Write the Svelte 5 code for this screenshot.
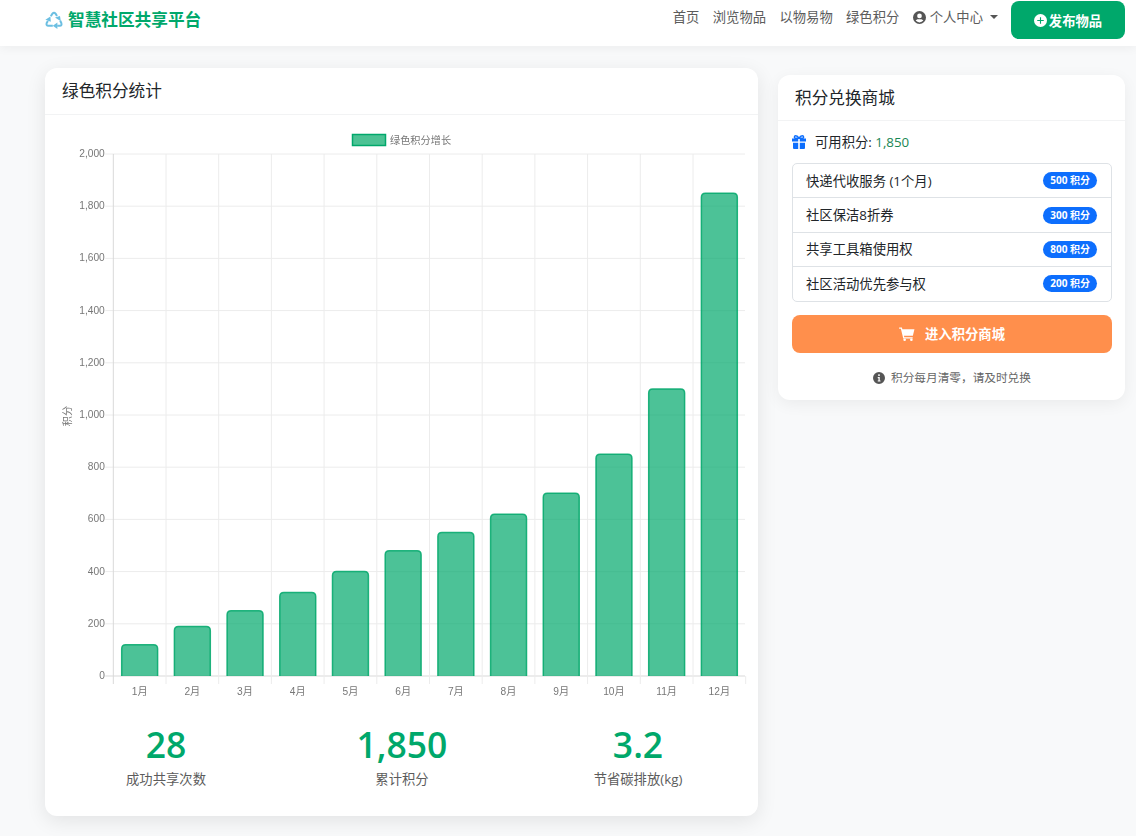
<script>
	const months = ['1月', '2月', '3月', '4月', '5月', '6月', '7月', '8月', '9月', '10月', '11月', '12月'];
	const values = [120, 190, 250, 320, 400, 480, 550, 620, 700, 850, 1100, 1850];
	const ticks = [0, 200, 400, 600, 800, 1000, 1200, 1400, 1600, 1800, 2000];

	const left = 68.3;
	const right = 700.7;
	const top = 39;
	const bottom = 561;
	const step = (right - left) / 12;

	const yOf = (v) => bottom - (v / 2000) * (bottom - top);
	const xOf = (i) => left + i * step;

	function barPath(i, v) {
		const x1 = xOf(i) + 8.4;
		const x2 = xOf(i) + step - 8.4;
		const y = yOf(v);
		return `M${x1} ${bottom}V${y + 4}Q${x1} ${y} ${x1 + 4} ${y}H${x2 - 4}Q${x2} ${y} ${x2} ${y + 4}V${bottom}`;
	}

	const rewards = [
		{ name: '快递代收服务 (1个月)', cost: 500 },
		{ name: '社区保洁8折券', cost: 300 },
		{ name: '共享工具箱使用权', cost: 800 },
		{ name: '社区活动优先参与权', cost: 200 }
	];

	const stats = [
		{ value: '28', label: '成功共享次数' },
		{ value: '1,850', label: '累计积分' },
		{ value: '3.2', label: '节省碳排放(kg)' }
	];
</script>

<div class="page">
	<nav class="navbar">
		<a class="brand" href="#top">
			<svg class="recycle" viewBox="0 0 18 18" width="18" height="18" aria-hidden="true">
				<g fill="none" stroke="#6cbfe2" stroke-width="2">
					<path d="M5.800 5.200 7.400 2.700Q9 1 10.600 2.700L12 5" />
					<path d="M15.200 9.800 16.300 12Q17.200 14.600 14.800 14.800H12.200" />
					<path d="M7.800 14.800H3.500Q.8 14.600 1.700 12L2.900 10" />
				</g>
				<g fill="#6cbfe2">
					<path d="M10 6.400l5-1.400.8 5.200z" />
					<path d="M12.400 11.400l-4.600 3.400 4.600 3.200z" />
					<path d="M.4 8.800l5.400 2L5.400 5.400z" />
				</g>
			</svg>
			智慧社区共享平台
		</a>
		<div class="nav-links">
			<a href="#top">首页</a>
			<a href="#top">浏览物品</a>
			<a href="#top">以物易物</a>
			<a href="#top">绿色积分</a>
			<a class="user" href="#top">
				<svg viewBox="0 0 16 16" width="13" height="13" aria-hidden="true">
					<path
						fill="#555"
						fill-rule="evenodd"
						d="M8 0a8 8 0 1 0 0 16A8 8 0 0 0 8 0zm0 3.2a2.9 2.9 0 1 1 0 5.8 2.9 2.9 0 0 1 0-5.8zM8 14a6.2 6.2 0 0 1-4.7-2.2c.6-1.1 1.8-1.8 3.1-1.8h3.2c1.3 0 2.500.7 3.100 1.800A6.200 6.200 0 0 1 8 14z"
					/>
				</svg>
				个人中心
				<span class="caret"></span>
			</a>
		</div>
		<button class="publish" type="button">
			<svg viewBox="0 0 16 16" width="13" height="13" aria-hidden="true">
				<path
					fill="#fff"
					fill-rule="evenodd"
					d="M8 0a8 8 0 1 0 0 16A8 8 0 0 0 8 0zm-.7 4h1.400v3.300H12v1.400H8.700V12H7.300V8.700H4V7.300h3.300z"
				/>
			</svg>
			发布物品
		</button>
	</nav>

	<main class="content">
		<section class="card points-card">
			<h2 class="card-head">绿色积分统计</h2>
			<svg class="chart" viewBox="0 0 713 590" width="713" height="590" role="img" aria-label="绿色积分增长">
				<rect x="307.500" y="19.500" width="33" height="11" fill="#4cc294" stroke="#00a86b" stroke-width="1.500" />
				<text x="345" y="29" class="legend">绿色积分增长</text>

				{#each ticks as t}
					<line
						x1={left - 8}
						x2={right - 0.7}
						y1={yOf(t)}
						y2={yOf(t)}
						stroke={t === 0 ? '#d9d9d9' : '#ececec'}
						stroke-width="1"
					/>
					<text x={left - 8.5} y={yOf(t) + 3} text-anchor="end" class="tick">{t.toLocaleString('en-US')}</text>
				{/each}

				{#each months as m, i}
					<line
						x1={xOf(i)}
						x2={xOf(i)}
						y1={top}
						y2={bottom + 8}
						stroke={i === 0 ? '#d9d9d9' : '#ececec'}
						stroke-width="1"
					/>
					<text x={xOf(i) + step / 2} y={bottom + 19} text-anchor="middle" class="tick">{m}</text>
				{/each}
				<line x1={right} x2={right} y1={bottom} y2={bottom + 8} stroke="#ececec" stroke-width="1" />

				{#each values as v, i}
					<path d={barPath(i, v)} fill="#00a86b" fill-opacity="0.7" stroke="#00a86b" stroke-width="1.500" stroke-opacity="0.85" />
				{/each}

				<text class="tick" text-anchor="middle" transform="translate(26 301) rotate(-90)">积分</text>
			</svg>

			<div class="stats">
				{#each stats as s}
					<div class="stat">
						<div class="stat-value">{s.value}</div>
						<div class="stat-label">{s.label}</div>
					</div>
				{/each}
			</div>
		</section>

		<aside class="card shop-card">
			<h2 class="card-head">积分兑换商城</h2>
			<div class="shop-body">
				<p class="balance">
					<svg viewBox="1 1 14 14" width="14" height="14" aria-hidden="true">
						<g fill="#0d6efd">
							<path d="M1 4.500h6.200v3H1zM8.800 4.500H15v3H8.800zM2 8.800h5.200V15H3a1 1 0 0 1-1-1zM8.800 8.800H14V14a1 1 0 0 1-1 1H8.800z" />
						</g>
						<path
							fill="none"
							stroke="#0d6efd"
							stroke-width="1.400"
							d="M8 4.300C7 2.300 5.800 1.700 4.700 1.700 3 1.700 2.800 4.300 4.800 4.300zM8 4.300c1-2 2.200-2.600 3.300-2.600 1.700 0 1.900 2.600-.1 2.600z"
						/>
					</svg>
					<span>可用积分: <b>1,850</b></span>
				</p>

				<ul class="rewards">
					{#each rewards as r}
						<li>
							<span>{r.name}</span>
							<span class="badge">{r.cost} 积分</span>
						</li>
					{/each}
				</ul>

				<button class="enter" type="button">
					<svg viewBox="0 0 18 16" width="16" height="14" aria-hidden="true">
						<path
							fill="#fff"
							d="M0 .500h3.200l.500 2H17.500l-1.800 7.500H5.500l.400 1.600h9.600v1.500H4.700L2 2H0z"
						/>
						<circle cx="6.300" cy="14.500" r="1.500" fill="#fff" />
						<circle cx="14" cy="14.500" r="1.500" fill="#fff" />
					</svg>
					进入积分商城
				</button>

				<p class="note">
					<svg viewBox="0 0 16 16" width="12" height="12" aria-hidden="true">
						<path
							fill="#555"
							fill-rule="evenodd"
							d="M8 0a8 8 0 1 0 0 16A8 8 0 0 0 8 0zM7 3h2v2.200H7zM6.300 6.800H9v4.600h1v1.400H6.300v-1.400h1V8.200h-1z"
						/>
					</svg>
					积分每月清零，请及时兑换
				</p>
			</div>
		</aside>
	</main>
</div>

<style>
	:global(body) {
		background: #f8f9fa;
		color: #212529;
		font-family: 'Open Sans', 'Noto Sans CJK SC', sans-serif;
		font-size: 13.33px;
	}

	.page {
		height: 836px;
		overflow: hidden;
	}

	a {
		color: inherit;
		text-decoration: none;
	}

	.navbar {
		display: flex;
		align-items: flex-start;
		height: 46px;
		padding: 1px 11px 0 45px;
		box-sizing: border-box;
		background: #fff;
		box-shadow: 0 2px 10px rgba(0, 0, 0, 0.05);
	}

	.brand {
		display: flex;
		align-items: center;
		gap: 5px;
		margin-top: 9px;
		font-size: 16.67px;
		line-height: 20px;
		font-weight: 700;
		color: #00a86b;
	}

	.nav-links {
		display: flex;
		align-items: center;
		gap: 13.33px;
		margin-left: auto;
		margin-top: 6px;
		line-height: 20px;
		color: #5c5c5c;
	}

	.user {
		display: flex;
		align-items: center;
		gap: 4px;
	}

	.caret {
		width: 0;
		height: 0;
		margin-left: 3px;
		border: 4px solid transparent;
		border-top-color: #555;
		border-bottom: 0;
	}

	.publish {
		display: flex;
		align-items: center;
		justify-content: center;
		gap: 2px;
		width: 114px;
		height: 38px;
		margin-left: 13px;
		border: 0;
		border-radius: 8px;
		background: #00a86b;
		color: #fff;
		font: inherit;
		font-weight: 700;
	}

	.content {
		display: flex;
		align-items: flex-start;
		gap: 20px;
		padding: 22px 11px 0 45px;
	}

	.card {
		background: #fff;
		border-radius: 12px;
		box-shadow: 0 4px 16px rgba(0, 0, 0, 0.06);
	}

	.card-head {
		margin: 0;
		padding: 12px 17px;
		font-size: 16.67px;
		line-height: 22px;
		font-weight: 400;
		border-bottom: 1px solid #f2f3f4;
	}

	.points-card {
		width: 713px;
		height: 748px;
		box-shadow: 0 5px 20px rgba(0, 0, 0, 0.09);
	}

	.chart {
		display: block;
		filter: blur(0.35px);
	}

	.legend,
	.tick {
		font-family: 'Liberation Sans', 'Noto Sans CJK SC', sans-serif;
		font-size: 10.2px;
		fill: #777;
	}

	.stats {
		display: grid;
		grid-template-columns: repeat(3, 1fr);
		margin: 18px 2px 0 3px;
		text-align: center;
	}

	.stat-value {
		font-size: 35.5px;
		line-height: 42px;
		font-weight: 600;
		color: #00a86b;
	}

	.stat-label {
		margin-top: 4px;
		line-height: 20px;
		color: #5c5c5c;
	}

	.shop-card {
		width: 347px;
		margin-top: 7px;
	}

	.shop-card .card-head {
		padding-bottom: 11px;
	}

	.shop-body {
		padding: 11px 13px 12px 14px;
	}

	.balance {
		display: flex;
		align-items: center;
		gap: 9px;
		margin: 0;
		line-height: 20px;
	}

	.balance b {
		font-weight: 400;
		color: #198754;
	}

	.rewards {
		margin: 11px 0 0;
		padding: 0;
		list-style: none;
		border: 1px solid #dee2e6;
		border-radius: 5px;
	}

	.rewards li {
		display: flex;
		align-items: center;
		justify-content: space-between;
		height: 33.4px;
		padding: 0 14px 0 13px;
		line-height: 20px;
	}

	.rewards li + li {
		border-top: 1px solid #dee2e6;
	}

	.badge {
		padding: 0 7px;
		border-radius: 9px;
		background: #0d6efd;
		color: #fff;
		font-size: 10px;
		line-height: 17px;
		font-weight: 700;
	}

	.enter {
		display: flex;
		align-items: center;
		justify-content: center;
		gap: 10px;
		width: 100%;
		height: 38px;
		margin-top: 13.4px;
		border: 0;
		border-radius: 8px;
		background: #ff8f4c;
		color: #fff;
		font: inherit;
		font-weight: 700;
	}

	.note {
		display: flex;
		align-items: center;
		justify-content: center;
		gap: 6px;
		margin: 15px 0 0;
		font-size: 11.67px;
		line-height: 20px;
		color: #666;
	}
</style>
